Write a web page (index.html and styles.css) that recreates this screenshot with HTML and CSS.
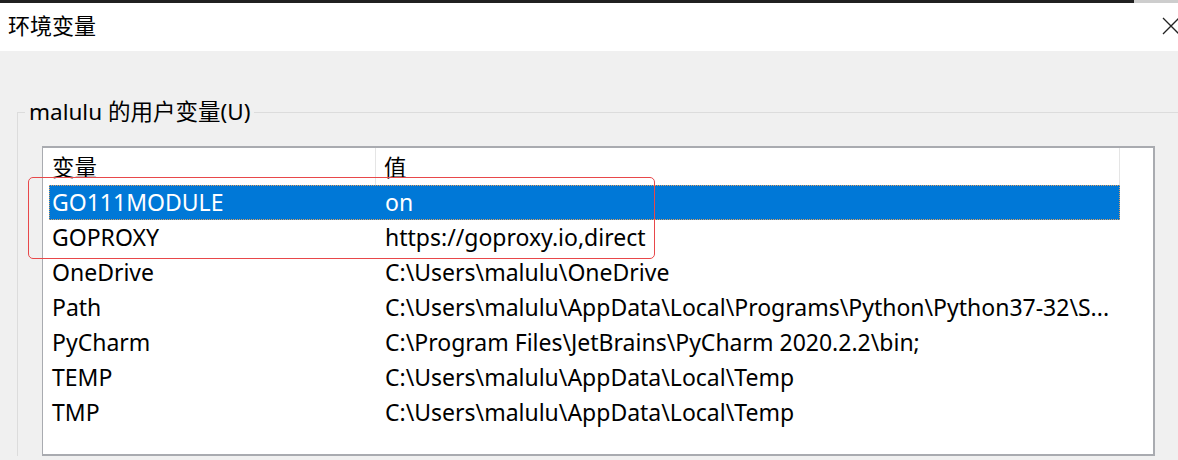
FILE: index.html
```html
<!DOCTYPE html>
<html lang="zh-CN">
<head>
<meta charset="utf-8">
<title>环境变量</title>
<link rel="stylesheet" href="styles.css">
</head>
<body>
<div class="window">
  <div class="topbar"><div class="topbar-dark"></div><div class="topbar-light"></div></div>
  <div class="titlebar">
    <div class="title">环境变量</div>
    <svg class="close" width="18" height="18" viewBox="0 0 18 18"><path d="M1 1 L17 17 M17 1 L1 17" stroke="#222" stroke-width="1.3" fill="none"/></svg>
  </div>
  <div class="main">
    <fieldset class="group">
      <legend class="group-label">malulu 的用户变量(U)</legend>
      <div class="list">
        <div class="list-header">
          <div class="hcell hname">变量</div>
          <div class="hcell hvalue">值</div>
        </div>
        <div class="row selected"><div class="cname">GO111MODULE</div><div class="cvalue">on</div></div>
        <div class="row"><div class="cname">GOPROXY</div><div class="cvalue">https://goproxy.io,direct</div></div>
        <div class="row"><div class="cname">OneDrive</div><div class="cvalue">C:\Users\malulu\OneDrive</div></div>
        <div class="row"><div class="cname">Path</div><div class="cvalue">C:\Users\malulu\AppData\Local\Programs\Python\Python37-32\S...</div></div>
        <div class="row"><div class="cname">PyCharm</div><div class="cvalue">C:\Program Files\JetBrains\PyCharm 2020.2.2\bin;</div></div>
        <div class="row"><div class="cname">TEMP</div><div class="cvalue">C:\Users\malulu\AppData\Local\Temp</div></div>
        <div class="row"><div class="cname">TMP</div><div class="cvalue">C:\Users\malulu\AppData\Local\Temp</div></div>
      </div>
    </fieldset>
  </div>
  <div class="highlight"></div>
</div>
</body>
</html>
```
FILE: styles.css
```css
html, body {
  margin: 0;
  padding: 0;
}
body {
  background: #f0f0f0;
  font-family: "Noto Sans", "Noto Sans CJK SC", sans-serif;
  color: #000;
}
.window {
  position: relative;
  width: 1178px;
  height: 460px;
  overflow: hidden;
  background: #f0f0f0;
}
.topbar {
  display: flex;
  height: 3px;
}
.topbar-dark {
  flex: 0 0 1134px;
  background: #202020;
}
.topbar-light {
  flex: 1;
  background: #cdcdcd;
}
.titlebar {
  height: 48px;
  background: #fff;
  display: flex;
  justify-content: space-between;
  align-items: flex-start;
  padding-left: 8px;
  box-sizing: border-box;
}
.title {
  font-family: "Noto Sans CJK SC", sans-serif;
  font-size: 22px;
  line-height: 26px;
  margin-top: 8px;
}
.close {
  margin-top: 14px;
  margin-right: -2px;
}
.main {
  padding-left: 17px;
}
.group {
  margin: 48px 0 0 0;
  padding: 0;
  border: 1px solid #dcdcdc;
  border-right: none;
  border-bottom: none;
  min-width: 0;
}
.group-label {
  font-size: 22.5px;
  line-height: 26px;
  padding: 0 4px;
  margin-left: 7px;
  color: #000;
}
.list {
  margin: 21px 0 0 24px;
  width: 1113px;
  height: 310px;
  box-sizing: border-box;
  background: #fff;
  border-top: 2px solid #a9abb0;
  border-left: 1px solid #a9abb0;
  border-right: 2px solid #a9abb0;
  border-bottom: 2px solid #a9abb0;
  font-size: 23px;
}
.list-header {
  display: grid;
  grid-template-columns: 333px 744px;
  height: 37px;
}
.hcell {
  line-height: 37px;
  font-size: 22.5px;
  font-family: "Noto Sans CJK SC", sans-serif;
  border-right: 1px solid #e5e5e5;
}
.hname {
  padding-left: 9px;
}
.hvalue {
  padding-left: 8px;
}
.row {
  display: grid;
  grid-template-columns: 327px 744px;
  margin-left: 6px;
  width: 1071px;
  height: 35px;
  line-height: 35px;
  box-sizing: border-box;
  white-space: nowrap;
}
.cname {
  padding-left: 3px;
}
.cvalue {
  padding-left: 9px;
}
.row.selected {
  background: #0078d7;
  color: #fff;
  outline: 1px dotted #e0a060;
  outline-offset: -1px;
}
.highlight {
  position: absolute;
  left: 28px;
  top: 177px;
  width: 627px;
  height: 82px;
  box-sizing: border-box;
  border: 1.5px solid #e8484a;
  border-radius: 5px;
}
```
